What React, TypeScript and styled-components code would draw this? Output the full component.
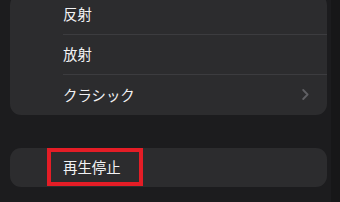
import styled, { createGlobalStyle } from "styled-components";

const GlobalStyle = createGlobalStyle`
  html, body {
    margin: 0;
    padding: 0;
  }
  body {
    background: linear-gradient(to right, #1c1c1e 331px, #171718 331px);
    font-family: "Noto Sans CJK JP", "Noto Sans", sans-serif;
    color: #f2f2f4;
    overflow: hidden;
  }
`;

const Page = styled.div`
  display: flex;
  flex-direction: column;
  gap: 33px;
  width: 317px;
  padding-left: 10px;
  height: 202px;
  overflow: hidden;
`;

const Card = styled.div<{ $cut?: boolean }>`
  display: flex;
  flex-direction: column;
  background: #2c2c2e;
  border-radius: 11px;
  margin-top: ${(p) => (p.$cut ? "-6px" : "0")};
`;

const Row = styled.div<{ $divider?: boolean }>`
  display: flex;
  align-items: center;
  justify-content: space-between;
  height: 39.5px;
  margin-left: 53px;
  padding-right: 18px;
  border-bottom: ${(p) => (p.$divider ? "1px solid #3c3c3f" : "none")};
`;

const Label = styled.span`
  font-size: 14.4px;
  line-height: 1;
  letter-spacing: 0;
`;

const Marked = styled.span`
  display: inline-flex;
  align-items: center;
  box-sizing: border-box;
  height: 38px;
  margin-left: -16px;
  padding: 0 18px 0 12px;
  border: 4px solid #e41d26;
`;

const Chevron = () => (
  <svg width="7" height="11" viewBox="0 0 7 11" fill="none">
    <path
      d="M1.2 1 L5.6 5.5 L1.2 10"
      stroke="#5f5f63"
      strokeWidth="1.8"
      strokeLinecap="round"
      strokeLinejoin="round"
    />
  </svg>
);

export default function App() {
  return (
    <>
      <GlobalStyle />
      <Page>
        <Card $cut>
          <Row $divider>
            <Label>反射</Label>
          </Row>
          <Row $divider>
            <Label>放射</Label>
          </Row>
          <Row>
            <Label>クラシック</Label>
            <Chevron />
          </Row>
        </Card>
        <Card>
          <Row>
            <Marked>
              <Label>再生停止</Label>
            </Marked>
          </Row>
        </Card>
      </Page>
    </>
  );
}
